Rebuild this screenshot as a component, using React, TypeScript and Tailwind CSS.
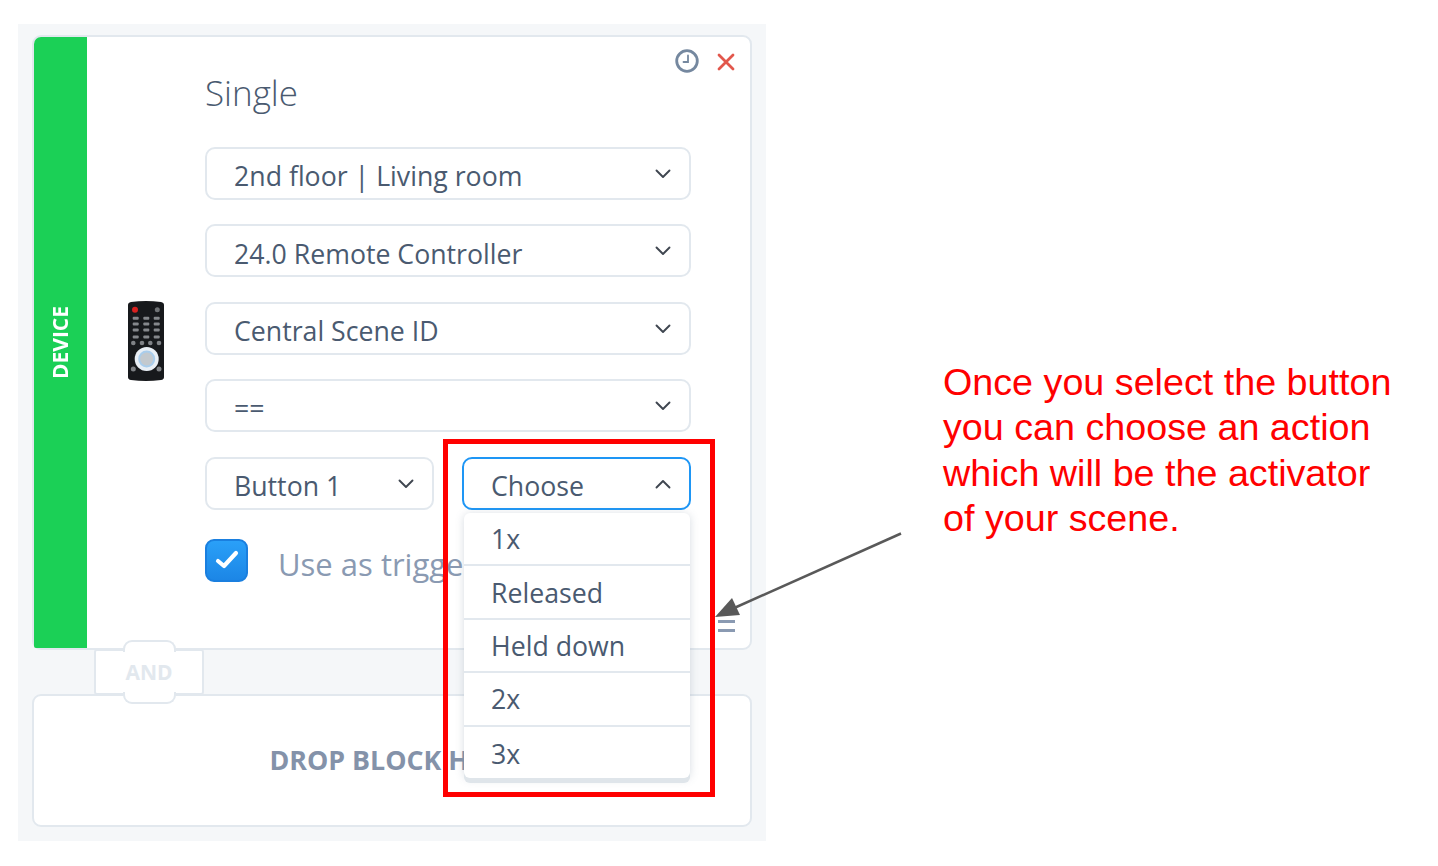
import React from "react";

function Chevron({ up = false }: { up?: boolean }) {
  return (
    <svg width="16" height="10" viewBox="0 0 16 10" fill="none" stroke="#3f4650" strokeWidth="1.900" strokeLinecap="round" strokeLinejoin="round">
      <path d={up ? "M1.500 8.500 L8 2 L14.500 8.500" : "M1.500 1.500 L8 8 L14.500 1.500"} />
    </svg>
  );
}

function Select({ label, focus = false, className = "" }: { label: string; focus?: boolean; className?: string }) {
  return (
    <div className={`h-[53px] flex items-center justify-between rounded-[10px] border-2 bg-white pl-[27px] pr-[18px] ${focus ? "border-[#1e96f5]" : "border-[#e2e8ee]"} ${className}`}>
      <span className="text-[26.700px] leading-none text-[#4a5a70] pt-[6px]">{label}</span>
      <span className="mt-[1px]"><Chevron up={focus} /></span>
    </div>
  );
}

function Remote() {
  return (
    <svg width="38" height="82" viewBox="0 0 38 82" className="blur-[0.4px]">
      <path d="M1 5 Q1 2.500 4 2 Q19 0 34 2 Q37 2.500 37 5 V77 Q37 79.500 34 80 Q19 82 4 80 Q1 79.500 1 77 Z" fill="#17191c" />
      <circle cx="8" cy="9.700" r="3" fill="#d8201f" />
      <circle cx="30.300" cy="9.700" r="2.500" fill="#6f7275" />
      {[18.300, 24, 30, 37].map((y) =>
        [8.700, 19.300, 29.700].map((x) => <rect key={`${y}-${x}`} x={x - 3} y={y - 1.500} width="6" height="3" rx="1" fill="#85888c" />)
      )}
      {[6.300, 15, 23.300, 32].map((x) => <circle key={x} cx={x} cy="43" r="2.300" fill="#7f8286" />)}
      <circle cx="19.700" cy="59" r="12" fill="#e9eff5" />
      <circle cx="19.700" cy="59" r="8.500" fill="#a9cdec" />
      <circle cx="19.700" cy="59" r="6.500" fill="#c3c9ce" />
      <circle cx="6.300" cy="69" r="2.500" fill="#7f8286" />
      <circle cx="32" cy="69" r="2.500" fill="#7f8286" />
    </svg>
  );
}

export default function App() {
  return (
    <div className="w-[1438px] h-[866px] bg-white flex items-start overflow-hidden font-['Open_Sans',sans-serif]">
      <div className="relative ml-[18px] mt-[24px] w-[748px] h-[817px] bg-[#f5f7f9] px-[14px] pt-[11px] shrink-0">
        {/* Device card */}
        <div className="relative h-[615px] rounded-[9px] border-2 border-[#e2e8ee] bg-white flex">
          <div className="w-[53px] bg-[#1bd056] flex items-center justify-center rounded-tl-[7px] rounded-bl-[2px]">
            <span className="[writing-mode:vertical-rl] rotate-180 text-white font-bold text-[21px] leading-none">DEVICE</span>
          </div>
          <div className="w-[118px] flex items-center justify-center pb-[4px] pr-[1px]">
            <Remote />
          </div>
          <div className="w-[486px]">
            <div className="h-[110px] pt-[34px] text-[35px] leading-[44px] font-light text-[#4a5a70]">Single</div>
            <div className="flex flex-col gap-[24.400px]">
              <Select label="2nd floor | Living room" />
              <Select label="24.0 Remote Controller" />
              <Select label="Central Scene ID" />
              <Select label="==" />
              <div className="flex justify-between">
                <Select label="Button 1" className="w-[229px]" />
                <Select label="Choose" focus className="w-[229px]" />
              </div>
            </div>
            <div className="flex items-center mt-[24px] gap-[30px]">
              <div className="w-[43px] h-[43px] rounded-[9px] border-2 border-[#1a7fdf] bg-linear-to-b from-[#2aa0f8] to-[#1c86e6] flex items-center justify-center">
                <svg width="24" height="20" viewBox="0 0 24 20" fill="none" stroke="#fff" strokeWidth="4.200" strokeLinecap="round" strokeLinejoin="round">
                  <path d="M3 11 L9 16 L21 3" />
                </svg>
              </div>
              <span className="text-[31px] leading-[46px] text-[#8a9ab2] whitespace-nowrap pt-[7px]">Use as trigger</span>
            </div>
          </div>
          {/* Card actions */}
          <div className="absolute right-[51px] top-[12px] w-[24px] h-[24px]">
            <svg width="24" height="24" viewBox="0 0 24 24" fill="none" stroke="#75889f" strokeWidth="2.800" strokeLinecap="round">
              <circle cx="12" cy="12" r="10.300" />
              <path d="M13 6.500 V13 H8.500" strokeWidth="1.800" />
            </svg>
          </div>
          <div className="absolute right-[15px] top-[16px]">
            <svg width="18" height="18" viewBox="0 0 18 18" stroke="#e2574c" strokeWidth="2.800" strokeLinecap="round">
              <path d="M2 2 L16 16 M16 2 L2 16" />
            </svg>
          </div>
          <div className="absolute right-[15px] bottom-[16px] w-[17px] flex flex-col gap-[6px]">
            <div className="h-[3px] bg-[#8a9ab2]" />
            <div className="h-[3px] bg-[#8a9ab2]" />
          </div>
        </div>

        {/* AND connector */}
        <div className="relative z-10 ml-[62px] w-[110px] h-[46px] -mt-[1px] -mb-[1px] rounded-[3px] border-2 border-[#e2e8ee] bg-white flex items-center justify-center">
          <div className="absolute left-[27px] -top-[11px] w-[53px] h-[12px] rounded-t-[9px] border-2 border-b-0 border-[#e2e8ee] bg-white" />
          <div className="absolute left-[27px] -bottom-[11px] w-[53px] h-[12px] rounded-b-[9px] border-2 border-t-0 border-[#e2e8ee] bg-white" />
          <span className="text-[21px] font-bold text-[#e2e8ee] leading-none">AND</span>
        </div>

        {/* Drop block */}
        <div className="h-[133px] rounded-[9px] border-2 border-[#e2e8ee] bg-white flex items-center justify-center pl-[2px]">
          <span className="text-[26.800px] font-bold text-[#8492a9] leading-none">DROP BLOCK HERE</span>
        </div>

        {/* Open dropdown */}
        <div className="absolute z-20 left-[446px] top-[489px] w-[226px] rounded-[6px] bg-white shadow-[0_5px_0_#dfe5ea,0_1px_8px_rgba(120,135,155,0.3)]">
          {["1x", "Released", "Held down", "2x"].map((o) => (
            <div key={o} className="h-[53.400px] flex items-center pl-[27px] pt-[1px] text-[26.700px] text-[#4a5a70] border-b-2 border-[#e2e8ee]">{o}</div>
          ))}
          <div className="h-[51px] pt-[3px] flex items-center pl-[27px] text-[26.700px] text-[#4a5a70]">3x</div>
        </div>

        {/* Annotation box */}
        <div className="absolute z-30 left-[425px] top-[415px] w-[272px] h-[358px] border-[5px] border-[#ff0000]" />
      </div>

      {/* Annotation arrow */}
      <svg className="absolute z-30 left-[710px] top-[528px]" width="200" height="95" viewBox="0 0 200 95" fill="none">
        <path d="M191 5.500 L22 81" stroke="#595959" strokeWidth="2.500" />
        <path d="M5 89 L22 70 L30 87 Z" fill="#595959" />
      </svg>

      {/* Annotation text */}
      <div className="ml-[177px] mt-[360px] w-[480px] text-[37.700px] leading-[45.300px] text-[#ff0000] font-['Liberation_Sans',sans-serif]">
        <div>Once you select the button</div>
        <div>you can choose an action</div>
        <div>which will be the activator</div>
        <div>of your scene.</div>
      </div>
    </div>
  );
}
